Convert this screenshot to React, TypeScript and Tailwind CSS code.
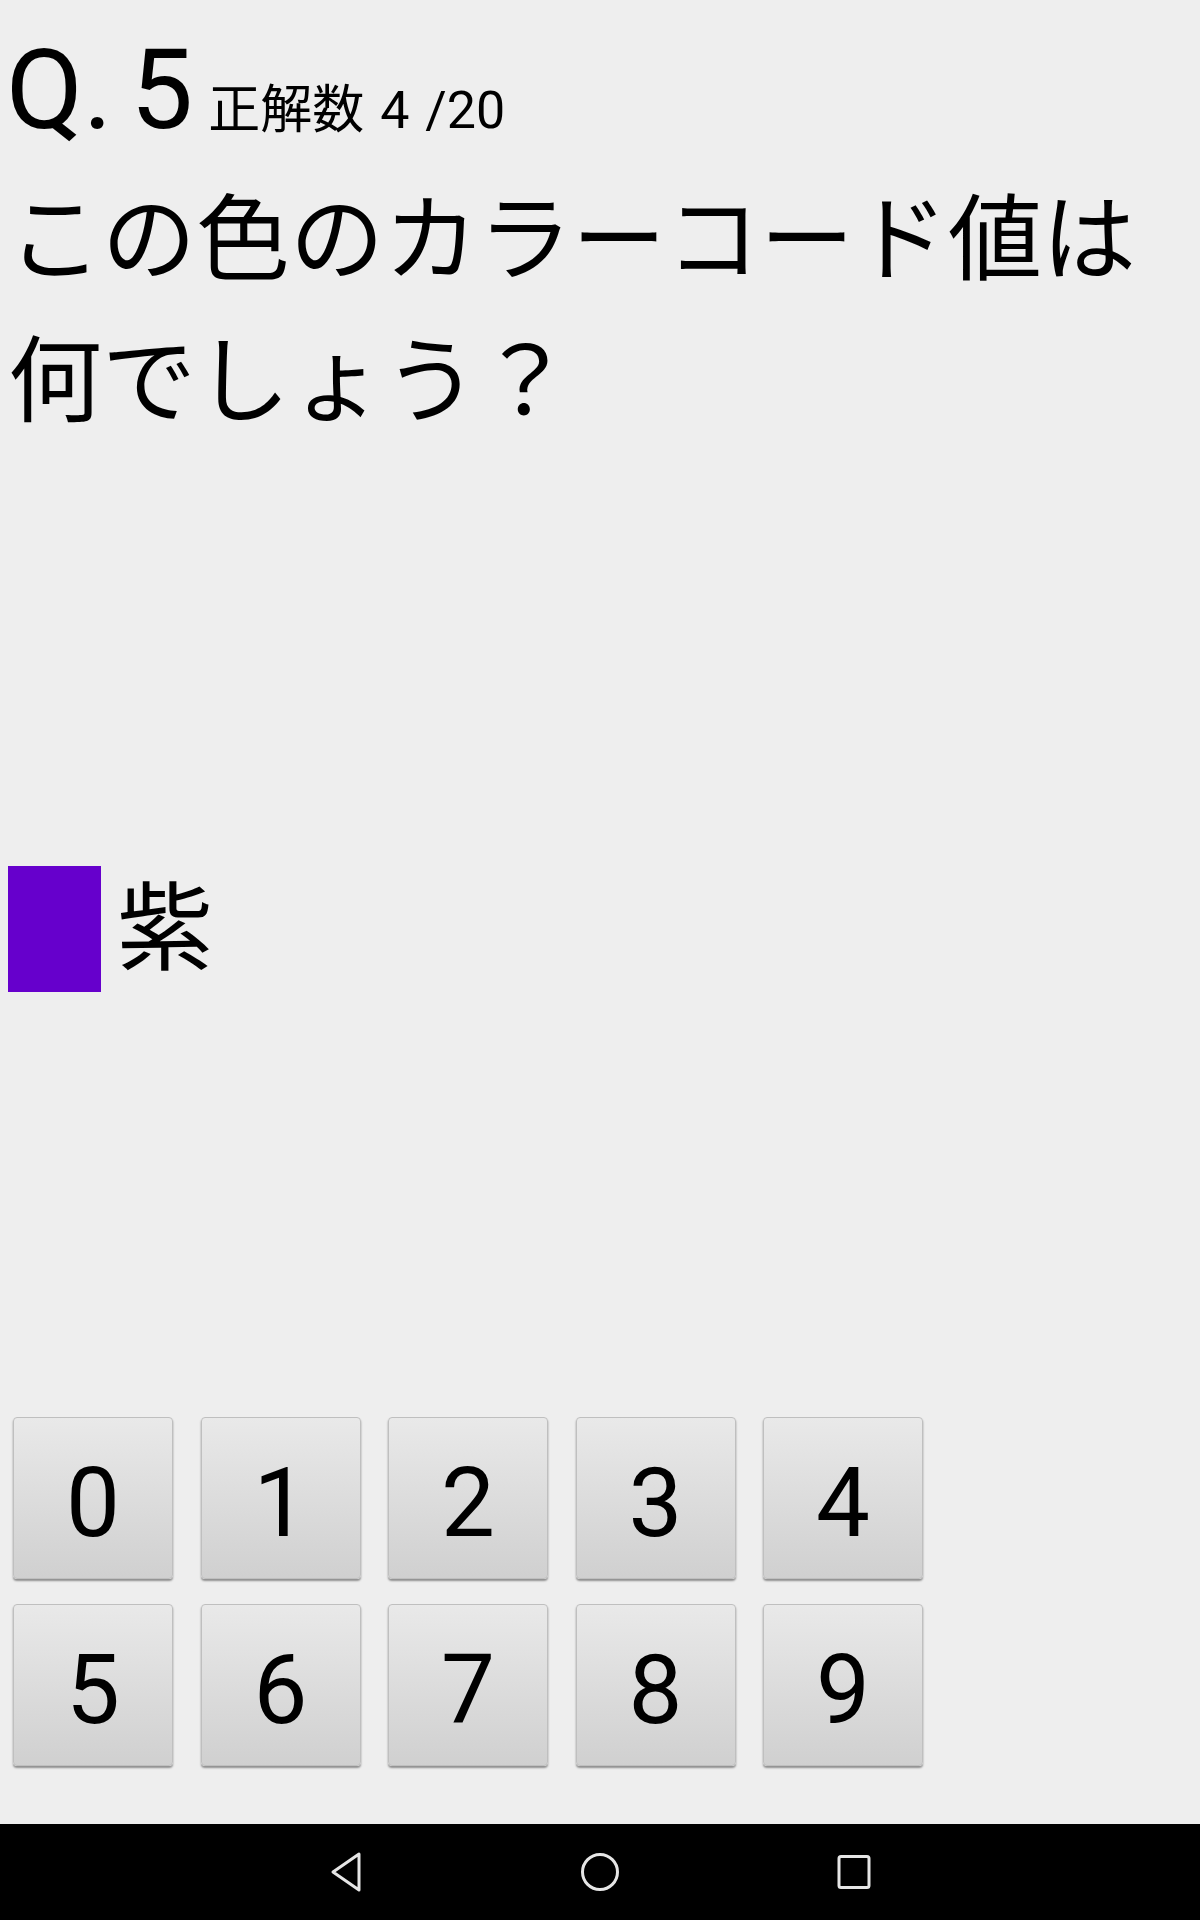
const font = { fontFamily: 'Roboto, "Noto Sans CJK JP", sans-serif' }

function NavBar() {
  return (
    <div className="h-[96px] bg-black flex items-center justify-center">
      <div className="flex items-center w-[544px] justify-between">
        {/* back */}
        <svg width="36" height="40" viewBox="0 0 36 40">
          <path d="M31 2 L31 38 L5 20 Z" fill="none" stroke="#e6e6e6" strokeWidth="3" strokeLinejoin="round" />
        </svg>
        {/* home */}
        <svg width="40" height="40" viewBox="0 0 40 40">
          <circle cx="20" cy="20" r="17.5" fill="none" stroke="#e6e6e6" strokeWidth="3" />
        </svg>
        {/* recents */}
        <svg width="36" height="36" viewBox="0 0 36 36">
          <rect x="3" y="2.5" width="30" height="31" rx="2" fill="none" stroke="#e6e6e6" strokeWidth="3" />
        </svg>
      </div>
    </div>
  )
}

function Key({ n }: { n: number }) {
  return (
    <button className="w-[160px] h-[162px] rounded-[4px] border border-[#bfbfbf] bg-gradient-to-b from-[#e9e9e9] to-[#d0d0d0] shadow-[0_2px_2px_rgba(0,0,0,0.4)] flex items-center justify-center text-[96px] leading-none text-black pt-[10px]">
      {n}
    </button>
  )
}

export default function App() {
  return (
    <div className="w-[1200px] h-[1920px] bg-[#eeeeee] flex flex-col text-black" style={font}>
      <div className="flex-1 flex flex-col">
        {/* header */}
        <div className="flex items-baseline pl-[6px] mt-[34px]">
          <span className="text-[112px] leading-none [word-spacing:-10px]">Q. 5</span>
          <span className="text-[52px] leading-none ml-[15px] [word-spacing:3px]">正解数 4 /20</span>
        </div>

        {/* question */}
        <p className="text-[94px] leading-[142px] pl-[8px] mt-[24px]">
          この色のカラーコード値は
          <br />
          何でしょう？
        </p>

        {/* colour */}
        <div className="flex items-center pl-[8px] mt-[412px]">
          <div className="w-[93px] h-[126px] bg-[#6600cc]" />
          <span className="text-[96px] leading-none ml-[16px]">紫</span>
        </div>

        <div className="flex-1" />

        {/* keypad */}
        <div className="pl-[13px] pb-[58px] flex flex-col gap-[25px]">
          <div className="flex gap-[27.5px]">
            {[0, 1, 2, 3, 4].map((n) => (
              <Key key={n} n={n} />
            ))}
          </div>
          <div className="flex gap-[27.5px]">
            {[5, 6, 7, 8, 9].map((n) => (
              <Key key={n} n={n} />
            ))}
          </div>
        </div>
      </div>
      <NavBar />
    </div>
  )
}
